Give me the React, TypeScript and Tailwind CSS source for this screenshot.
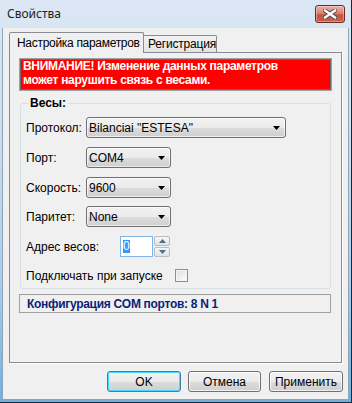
import React from "react";

function Arrow() {
  return (
    <svg width="7" height="4" viewBox="0 0 7 4" className="shrink-0">
      <path d="M0 0 H7 L3.5 4 Z" fill="#000" />
    </svg>
  );
}

function Combo({ w, value }: { w: string; value: string }) {
  return (
    <div
      className={`${w} h-[21px] flex items-center pl-[2px] pr-[5px] rounded-[3px] border border-[#707070] bg-[linear-gradient(to_bottom,#f2f2f2_0%,#ebebeb_50%,#dddddd_51%,#cfcfcf_100%)] shadow-[inset_0_0_0_1px_rgba(255,255,255,0.6)]`}
    >
      <span className="flex-1 text-[12px] text-black whitespace-nowrap">{value}</span>
      <Arrow />
    </div>
  );
}

function Button({ w, label, def }: { w: string; label: string; def?: boolean }) {
  return (
    <div
      className={`${w} h-[21px] flex items-center justify-center rounded-[3px] border ${
        def
          ? "border-[#3c7fb1] shadow-[inset_0_0_0_1px_#48d8fb]"
          : "border-[#707070] shadow-[inset_0_0_0_1px_rgba(255,255,255,0.7)]"
      } bg-[linear-gradient(to_bottom,#f2f2f2_0%,#ebebeb_50%,#dddddd_51%,#cfcfcf_100%)] text-[12px] text-black whitespace-nowrap`}
    >
      {label}
    </div>
  );
}

export default function App() {
  return (
    <div className="w-[352px] h-[403px] flex flex-col bg-[linear-gradient(to_bottom,#dbe7f4_0%,#cfdff0_30%,#a9cdea_70%,#6cb2df_100%)] border-r border-b border-[#1b2733] font-['Liberation_Sans',Arial,sans-serif] text-[12px] leading-none text-black select-none">
      {/* Title bar */}
      <div className="h-[28px] shrink-0 flex items-start pl-[7px] pr-[6px]">
        <span className="mt-[7px] text-[12px] leading-[14px] text-[#1e1e1e] font-['Noto_Sans',sans-serif]">Свойства</span>
        <div className="ml-auto mt-[5px] w-[30px] h-[18px] rounded-[3px] border border-[#6b2a22] bg-[linear-gradient(to_bottom,#eab0a6_0%,#d98575_45%,#c75540_55%,#c8604a_100%)] shadow-[inset_0_0_0_1px_rgba(255,255,255,0.35)] flex items-center justify-center">
          <svg width="14" height="10" viewBox="0 0 14 10">
            <path d="M2 1.5 L12 8.5 M12 1.5 L2 8.5" stroke="#4a4a4a" strokeWidth="4.2" strokeLinecap="square" />
            <path d="M2 1.5 L12 8.5 M12 1.5 L2 8.5" stroke="#ffffff" strokeWidth="2.4" strokeLinecap="square" />
          </svg>
        </div>
      </div>

      {/* Client area */}
      <div className="flex-1 mx-[2px] mb-[2px] border border-t-0 border-[#8ea3b8] bg-[#f0f0f0] flex flex-col pt-[4px] pl-[6px]">
        {/* Tabs */}
        <div className="flex items-end h-[20px]">
          <div className="relative z-10 h-[21px] -mb-[1px] w-[135px] border border-b-0 border-[#898c95] rounded-t-[2px] bg-[#f0f0f0] flex items-center pl-[7px] pb-[1px]">
            <span className="text-[12px] tracking-[-0.3px] whitespace-nowrap">Настройка параметров</span>
          </div>
          <div className="h-[17px] w-[73px] border border-l-0 border-b-0 border-[#898c95] rounded-tr-[2px] bg-[linear-gradient(to_bottom,#f2f2f2,#e3e3e3)] flex items-center pl-[4px]">
            <span className="text-[12px] tracking-[-0.2px] whitespace-nowrap">Регистрация</span>
          </div>
        </div>

        {/* Tab panel */}
        <div className="w-[333px] h-[311px] border border-[#898c95] shadow-[1px_1px_0_#ffffff] bg-[#f0f0f0] flex flex-col pt-[5px]">
          {/* Warning */}
          <div className="ml-[9px] w-[313px] h-[33px] border border-[#a0a0a0] shadow-[inset_0_0_0_1px_#696969] bg-[#ff0000] pl-[3px] pt-0 text-white font-bold text-[12px] leading-[14px] tracking-[-0.3px] whitespace-nowrap">
            <div>ВНИМАНИЕ! Изменение данных параметров</div>
            <div>может нарушить связь с весами.</div>
          </div>

          {/* Group box */}
          <div className="relative ml-[10px] mt-[12px] w-[311px] h-[186px] border border-[#d5dfe5] rounded-[3px] pl-[5px] pt-[13px] flex flex-col">
            <span className="absolute top-[-8px] left-[7px] px-[2px] bg-[#f0f0f0] font-bold text-[12px] leading-[14px]">
              Весы:
            </span>
            <div className="flex items-center h-[21px]">
              <span className="w-[60px] whitespace-nowrap">Протокол:</span>
              <Combo w="w-[200px]" value={'Bilanciai "ESTESA"'} />
            </div>
            <div className="flex items-center h-[21px] mt-[9px]">
              <span className="w-[60px]">Порт:</span>
              <Combo w="w-[85px]" value="COM4" />
            </div>
            <div className="flex items-center h-[21px] mt-[9px]">
              <span className="w-[60px]">Скорость:</span>
              <Combo w="w-[85px]" value="9600" />
            </div>
            <div className="flex items-center h-[21px] mt-[8px]">
              <span className="w-[60px]">Паритет:</span>
              <Combo w="w-[85px]" value="None" />
            </div>
            <div className="flex items-center h-[21px] mt-[9px]">
              <span className="w-[94px] whitespace-nowrap">Адрес весов:</span>
              <div className="w-[33px] h-[21px] border border-[#7eb4ea] bg-white flex items-center pl-[2px]">
                <span className="bg-[#3399ff] text-white leading-[13px] px-[0px]">0</span>
              </div>
              <div className="ml-[1px] w-[16px] h-[21px] flex flex-col gap-[1px]">
                <div className="h-[10px] border border-[#b6bcc6] rounded-[2px] bg-[linear-gradient(to_bottom,#f6f6f6,#dfe3e8)] flex items-center justify-center">
                  <svg width="7" height="4" viewBox="0 0 7 4">
                    <path d="M0 4 H7 L3.5 0 Z" fill="#4f6c95" />
                  </svg>
                </div>
                <div className="h-[10px] border border-[#b6bcc6] rounded-[2px] bg-[linear-gradient(to_bottom,#f6f6f6,#dfe3e8)] flex items-center justify-center">
                  <svg width="7" height="4" viewBox="0 0 7 4">
                    <path d="M0 0 H7 L3.5 4 Z" fill="#4f6c95" />
                  </svg>
                </div>
              </div>
            </div>
            <div className="flex items-center h-[13px] mt-[12px]">
              <span className="w-[149px] whitespace-nowrap">Подключать при запуске</span>
              <div className="w-[13px] h-[13px] border border-[#8f8f8f] bg-[linear-gradient(135deg,#dcdcdc,#ffffff)] shadow-[inset_0_0_0_1px_#f4f4f4]" />
            </div>
          </div>

          {/* Status */}
          <div className="ml-[9px] mt-[5px] w-[312px] h-[19px] border border-[#a0a0a0] flex items-center pl-[7px]">
            <span className="font-bold text-[#0c1f78] text-[12px] tracking-[-0.3px] whitespace-nowrap">Конфигурация COM портов: 8 N 1</span>
          </div>
        </div>

        {/* Buttons */}
        <div className="flex mt-[8px] pl-[98px]">
          <Button w="w-[74px]" label="OK" def />
          <div className="w-[7px]" />
          <Button w="w-[73px]" label="Отмена" />
          <div className="w-[8px]" />
          <Button w="w-[74px]" label="Применить" />
        </div>
      </div>
    </div>
  );
}
